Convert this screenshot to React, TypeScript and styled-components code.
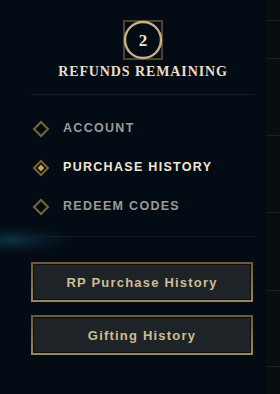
import React from "react";
import styled, { createGlobalStyle } from "styled-components";

const Global = createGlobalStyle`
  html, body { margin: 0; padding: 0; background: #030b14; }
  body { width: 280px; height: 394px; overflow: hidden; }
`;

const Page = styled.div`
  display: flex;
  width: 280px;
  height: 394px;
  background: #030b14;
  position: relative;
  overflow: hidden;
`;

const Glow = styled.div`
  position: absolute;
  left: -50px;
  top: 226px;
  width: 120px;
  height: 28px;
  border-radius: 50%;
  background: radial-gradient(ellipse at center, rgba(30, 110, 140, 0.38) 0%, rgba(20, 80, 110, 0.14) 45%, rgba(3, 11, 20, 0) 75%);
  pointer-events: none;
`;

const Sidebar = styled.div`
  width: 266px;
  box-sizing: border-box;
  padding: 20px 11px 0 31px;
  display: flex;
  flex-direction: column;
  position: relative;
  z-index: 1;
`;

const Header = styled.div`
  display: flex;
  flex-direction: column;
  align-items: center;
`;

const Title = styled.div`
  margin-top: 4px;
  font-family: "Liberation Serif", "Times New Roman", serif;
  font-weight: bold;
  font-size: 14px;
  line-height: 16px;
  letter-spacing: 0.9px;
  color: #e8dfc9;
  white-space: nowrap;
`;

const Divider = styled.div<{ $top: number }>`
  margin-top: ${(p) => p.$top}px;
  height: 1px;
  width: 224px;
  background: #141d25;
`;

const Nav = styled.div`
  display: flex;
  flex-direction: column;
  gap: 1px;
  padding: 14px 0 11px 1px;
`;

const NavItem = styled.div<{ $active?: boolean }>`
  height: 38px;
  display: flex;
  align-items: center;
  gap: 13px;
  font-family: "Liberation Sans", Arial, sans-serif;
  font-weight: bold;
  font-size: 12.5px;
  letter-spacing: 1.3px;
  color: ${(p) => (p.$active ? "#f0e6d2" : "#9a9a98")};
  white-space: nowrap;
  svg { flex: none; margin-top: 2px; }
`;

const Buttons = styled.div`
  display: flex;
  flex-direction: column;
  gap: 13px;
  margin-top: 25px;
`;

const Button = styled.button`
  width: 222px;
  height: 40px;
  box-sizing: border-box;
  padding: 0;
  border: 2px solid transparent;
  border-image: linear-gradient(to bottom, #6e5b34, #9b8758) 1;
  background: #1e2328;
  box-shadow: inset 0 0 0 1px #0c0f12;
  font-family: "Liberation Sans", Arial, sans-serif;
  font-weight: bold;
  font-size: 13px;
  letter-spacing: 1.2px;
  color: #cdbe91;
  cursor: pointer;
`;

const Main = styled.div`
  flex: 1;
  background: #080d10;
  display: flex;
  flex-direction: column;
  padding-top: 20px;
`;

const Row = styled.div<{ $h: number }>`
  height: ${(p) => p.$h}px;
  border-top: 1px solid #1a2126;
  box-sizing: border-box;
`;

const Badge = () => (
  <svg width="40" height="40" viewBox="0 0 40 40">
    <rect x="1" y="1" width="38" height="38" fill="none" stroke="#4f4228" strokeWidth="2" />
    <circle cx="20" cy="20" r="18" fill="#030b14" stroke="#c4b187" strokeWidth="2.4" />
    <text
      x="20"
      y="26"
      textAnchor="middle"
      fontFamily="'Liberation Serif', serif"
      fontWeight="bold"
      fontSize="17"
      fill="#f0e6d2"
    >
      2
    </text>
  </svg>
);

const Diamond = ({ active }: { active?: boolean }) => (
  <svg width="18" height="18" viewBox="0 0 18 18">
    <polygon points="9,2 16,9 9,16 2,9" fill="none" stroke="#7a6535" strokeWidth="2" />
    {active && <polygon points="9,5.6 12.4,9 9,12.4 5.6,9" fill="#c9a55c" />}
  </svg>
);

export default function App() {
  return (
    <>
      <Global />
      <Page>
        <Glow />
        <Sidebar>
          <Header>
            <Badge />
            <Title>REFUNDS REMAINING</Title>
          </Header>
          <Divider $top={14} />
          <Nav>
            <NavItem>
              <Diamond />
              ACCOUNT
            </NavItem>
            <NavItem $active>
              <Diamond active />
              PURCHASE HISTORY
            </NavItem>
            <NavItem>
              <Diamond />
              REDEEM CODES
            </NavItem>
          </Nav>
          <Divider $top={0} />
          <Buttons>
            <Button>RP Purchase History</Button>
            <Button>Gifting History</Button>
          </Buttons>
        </Sidebar>
        <Main>
          <Row $h={38} />
          <Row $h={77} />
          <Row $h={77} />
          <Row $h={78} />
          <Row $h={76} />
          <Row $h={28} />
        </Main>
      </Page>
    </>
  );
}
